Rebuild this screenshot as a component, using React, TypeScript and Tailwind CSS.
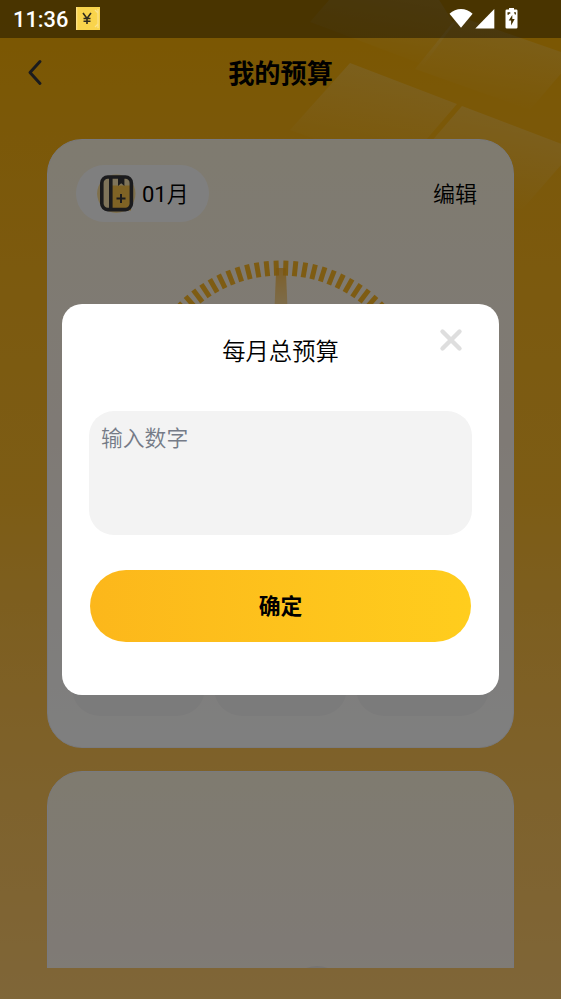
import { useState } from 'react'

const TICKS = Array.from({ length: 26 }, (_, i) => (i - 12.5) * 3.92)

const StatusBar = () => (
  <div className="relative flex h-[37.5px] items-center bg-black/40 pl-[13px]">
    <span className="mt-[2px] w-[63px] text-[21.8px] leading-none font-medium text-white">11:36</span>
    <svg width="24" height="23" viewBox="0 0 24 23">
      <rect width="24" height="23" fill="#f9d44c" />
      <path d="M.7 0v23M22 2v19M19 3l3 3M19 20l3-3" stroke="#fbe28c" strokeWidth="1.2" fill="none" />
      <path d="M7 6l4 5.5L15 6M11 11.5V17M7.5 11.5h7M7.5 14.2h7" stroke="#302b1d" strokeWidth="1.6" fill="none" />
    </svg>
    <svg className="ml-auto mr-[42px]" width="70" height="21" viewBox="0 0 70 21" fill="#fff">
      <path d="M.5 5.8C7-.5 17-.5 23.6 5.8L12 19.8z" />
      <path d="M45.3 1v19.5h-19z" />
      <path d="M60 1.5V0h5v1.5h2.2q1.3 0 1.3 1.3v16.4q0 1.3-1.3 1.3h-9.4q-1.3 0-1.3-1.3V2.8q0-1.3 1.3-1.3z" />
      <path d="M63.3 7l-3.6 5.4h2.4v5l3.6-6.4h-2.4zM58.5 4.2h2.8v1.6h-1.4v1h-1.4zM64.9 4.2h2v2.4h-1z" fill="#463202" />
    </svg>
  </div>
)

const Backdrop = () => (
  <svg className="absolute top-0 right-0" width="281" height="250" viewBox="280 0 281 250">
    <defs>
      <linearGradient id="tile" x1="0.6" y1="0.1" x2="0.35" y2="0.9">
        <stop offset="0" stopColor="#fff" stopOpacity="0.19" />
        <stop offset="1" stopColor="#fff" stopOpacity="0" />
      </linearGradient>
    </defs>
    <g fill="url(#tile)">
      <path d="M350 63L457 104L400 170L290 130z" />
      <path d="M462 106L575 149L520 212L405 172z" />
      <path d="M458 16L575 57L530 110L415 69z" />
      <path d="M342 -15H430L454 24L424 65L310 22z" />
    </g>
  </svg>
)

const BookIcon = () => (
  <svg width="40" height="40" viewBox="0 0 40 40">
    <circle cx="20.3" cy="19.7" r="19.2" fill="#ffe198" />
    <rect x="5" y="3.5" width="30" height="33" rx="6" fill="#ffe9b4" />
    <path d="M16 11.5h19v25H16z" fill="#ffc64a" />
    <rect x="5.8" y="3" width="29.6" height="32.6" rx="6" fill="none" stroke="#36363a" strokeWidth="3.6" />
    <path d="M14.8 4v32" stroke="#36363a" strokeWidth="3.6" />
    <path d="M22 3h6.4v9l-3.2-2.7L22 12z" fill="#36363a" />
    <path d="M25 20v9M20.5 24.5h9" stroke="#36363a" strokeWidth="2" />
  </svg>
)

const Gauge = () => (
  <svg className="mx-auto mt-[38px] block" width="310" height="145" viewBox="-155 -145.5 310 145">
    <defs>
      <linearGradient id="needle" x1="0" y1="0" x2="0" y2="1">
        <stop offset="0" stopColor="#f8ab1c" stopOpacity="0.75" />
        <stop offset="0.5" stopColor="#f8bd4c" stopOpacity="0.55" />
        <stop offset="1" stopColor="#f8bd4c" stopOpacity="0.1" />
      </linearGradient>
    </defs>
    {TICKS.map((angle) => (
      <rect key={angle} x="-2.5" y="-145" width="5" height="15" fill="#fcb826" transform={`rotate(${angle})`} />
    ))}
    <path d="M-4.8-137.5h9.6l3 70h-15.6z" fill="url(#needle)" />
  </svg>
)

const BudgetCard = () => (
  <div className="flex h-[609px] flex-col rounded-[35px] border border-[#f2f5ff] bg-linear-to-b from-[#fff6e0] via-[#fff5eb] to-white px-[28px] pt-[25px] pb-[31px]">
    <div className="flex h-[57px] items-center justify-between">
      <div className="flex h-full w-[133px] items-center rounded-full bg-white pl-[20px]">
        <BookIcon />
        <span className="mt-[2px] ml-[6px] text-[22px]">
          01<span className="font-[350]">月</span>
        </span>
      </div>
      <span className="mt-[2px] mr-[8px] text-[22px] font-[350]">编辑</span>
    </div>
    <Gauge />
    <div className="-mx-[4px] mt-auto grid grid-cols-3 gap-[9px]">
      <div className="h-[90px] rounded-[28px] bg-[#f6f6f6]" />
      <div className="h-[90px] rounded-[28px] bg-[#f6f6f6]" />
      <div className="h-[90px] rounded-[28px] bg-[#f6f6f6]" />
    </div>
  </div>
)

const BudgetDialog = () => {
  const [amount, setAmount] = useState('')

  return (
    <div className="absolute inset-0 flex justify-center bg-black/50">
      <div className="relative mt-[304px] flex h-[391px] w-[437px] flex-col rounded-[20px] bg-white px-[27px]">
        <button className="absolute top-[24px] right-[36px]">
          <svg width="24" height="24" viewBox="0 0 24 24" stroke="#dedede" strokeWidth="4.4" strokeLinecap="round">
            <path d="M3.5 3.5l17 17M20.5 3.5l-17 17" />
          </svg>
        </button>
        <h2 className="mt-[31px] text-center text-[23.3px] leading-[34px] font-[350]">每月总预算</h2>
        <textarea
          className="mt-[42px] h-[124px] w-full resize-none rounded-[25px] bg-[#f3f3f3] px-[12px] pt-[12px] text-[21.8px] leading-[32px] font-[350] outline-none placeholder:text-[#757b87]"
          placeholder="输入数字"
          value={amount}
          onChange={(e) => setAmount(e.target.value)}
        />
        <button className="mx-[1px] mt-[35px] h-[72px] rounded-full bg-linear-to-r from-[#fcb71b] to-[#ffcd1d] pt-[3px] text-[21.8px] font-bold">
          确定
        </button>
      </div>
    </div>
  )
}

export default function App() {
  return (
    <div className="relative h-[999px] w-[561px] overflow-hidden bg-linear-to-b from-[#f6ae00] via-[#fab92a] to-[#ffcc70] font-['Roboto','Noto_Sans_CJK_SC',sans-serif] text-black">
      <Backdrop />
      <div className="relative flex h-[968px] flex-col overflow-hidden">
        <div className="mt-[38px] flex h-[70px] shrink-0 items-center">
          <svg className="ml-[27px]" width="16" height="28" viewBox="0 0 16 28" fill="none" stroke="#34363c" strokeWidth="3" strokeLinecap="round" strokeLinejoin="round">
            <path d="M13 2.5L3 13.5l10 11" />
          </svg>
          <h1 className="mt-[4px] mr-[43px] flex-1 text-center text-[26.2px] font-bold">我的预算</h1>
        </div>
        <div className="mx-[47px] mt-[31px] flex flex-col gap-[23px]">
          <BudgetCard />
          <div className="flex h-[300px] flex-col items-center rounded-[35px] border border-[#f2f5ff] bg-linear-to-b from-[#fff6e0] via-[#fff5eb] via-60% to-[#fffff0]">
            <div className="mt-[194px] ml-[72px] h-[60px] w-[60px] rounded-full bg-[#ece9e6]" />
          </div>
        </div>
      </div>
      <BudgetDialog />
      <div className="absolute inset-x-0 top-0">
        <StatusBar />
      </div>
    </div>
  )
}
